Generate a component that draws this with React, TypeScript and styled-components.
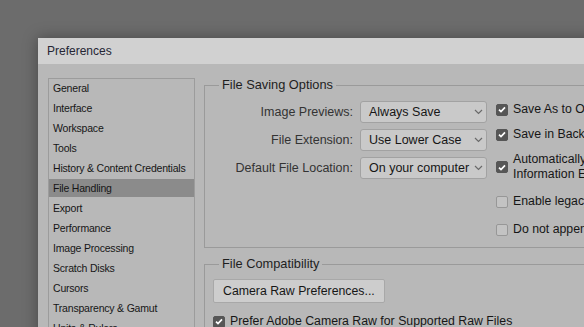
import React, { FC } from 'react';
import styled, { createGlobalStyle } from 'styled-components';

const GlobalStyle = createGlobalStyle`
  html, body {
    margin: 0;
    padding: 0;
    height: 100%;
    overflow: hidden;
    background: #6c6c6c;
  }
  body {
    font-family: "Liberation Sans", Arial, sans-serif;
    color: #1f1f1f;
  }
`;

const Desktop = styled.div`
  padding: 38px 0 0 38px;
`;

const Dialog = styled.div`
  width: 820px;
  height: 420px;
  background: #b8b8b8;
  box-shadow: 0 0 14px rgba(0, 0, 0, 0.35);
  display: flex;
  flex-direction: column;
`;

const TitleBar = styled.div`
  height: 26px;
  background: #d1d1d1;
  display: flex;
  align-items: center;
  padding-left: 9px;
  font-size: 12px;
  color: #262634;
`;

const Body = styled.div`
  display: flex;
  align-items: flex-start;
  padding: 14px 0 0 10px;
  gap: 9px;
`;

const Sidebar = styled.ul`
  list-style: none;
  margin: 0;
  padding: 0;
  width: 145px;
  height: 300px;
  border: 1px solid #9c9c9c;
  flex-shrink: 0;
`;

const NavItem = styled.li<{ $active?: boolean }>`
  height: 18px;
  margin-bottom: 2px;
  padding-left: 4px;
  display: flex;
  align-items: center;
  font-size: 10.5px;
  letter-spacing: -0.2px;
  color: #161616;
  background: ${(p) => (p.$active ? '#8b8b8b' : 'transparent')};
`;

const Panel = styled.div`
  flex: 1;
  margin-top: -1px;
  display: flex;
  flex-direction: column;
`;

const Group = styled.fieldset<{ $mt?: number; $pt: number; $pb: number }>`
  margin: ${(p) => p.$mt ?? 0}px 0 0 0;
  padding: ${(p) => p.$pt}px 0 ${(p) => p.$pb}px 8px;
  border: 1px solid #9a9a9a;
  min-width: 0;
`;

const Legend = styled.legend`
  margin-left: 6px;
  padding: 0 3px;
  line-height: 16px;
  font-size: 12.8px;
  color: #1e1e1e;
`;

const SavingLayout = styled.div`
  display: flex;
  align-items: flex-start;
  padding-left: 6px;
`;

const FieldGrid = styled.div`
  display: grid;
  grid-template-columns: 134px 127px;
  column-gap: 7px;
  row-gap: 6px;
  align-items: center;
`;

const FieldLabel = styled.span`
  justify-self: end;
  font-size: 12.5px;
  color: #333;
  white-space: nowrap;
`;

const Select = styled.div`
  height: 20px;
  border: 1px solid #a2a2a2;
  border-radius: 3px;
  background: #c9c9c9;
  display: flex;
  align-items: center;
  justify-content: space-between;
  padding: 0 3px 0 8px;
  font-size: 12.5px;
  color: #161616;
  white-space: nowrap;
  overflow: hidden;
`;

const Options = styled.div`
  margin-left: 9px;
  margin-top: 1px;
  display: flex;
  flex-direction: column;
`;

const CheckRow = styled.label<{ $mt?: number }>`
  display: flex;
  align-items: center;
  gap: 5px;
  margin-top: ${(p) => p.$mt ?? 0}px;
  font-size: 12.3px;
  line-height: 15px;
  color: #161616;
  white-space: nowrap;
`;

const Box = styled.span<{ $checked?: boolean }>`
  width: 12px;
  height: 12px;
  box-sizing: border-box;
  border-radius: 2px;
  flex-shrink: 0;
  display: flex;
  align-items: center;
  justify-content: center;
  background: ${(p) => (p.$checked ? '#565656' : '#c3c3c3')};
  border: 1px solid ${(p) => (p.$checked ? '#565656' : '#979797')};
`;

const Button = styled.button`
  width: 172px;
  height: 24px;
  border: 1px solid #a8a8a8;
  border-radius: 2px;
  background: #cdcdcd;
  text-align: left;
  padding: 0 0 0 9px;
  font-family: inherit;
  font-size: 12.3px;
  color: #161616;
`;

const CompatStack = styled.div`
  display: flex;
  flex-direction: column;
  align-items: flex-start;
`;

const Chevron: FC = () => (
  <svg width="9" height="6" viewBox="0 0 9 6">
    <polyline points="1,1 4.5,4.5 8,1" fill="none" stroke="#6a6a6a" strokeWidth="1.2" />
  </svg>
);

const Check: FC<{ checked?: boolean }> = ({ checked }) => (
  <Box $checked={checked}>
    {checked && (
      <svg width="8" height="7" viewBox="0 0 8 7">
        <polyline points="1,3.6 3,5.6 7,1.4" fill="none" stroke="#fff" strokeWidth="1.7" />
      </svg>
    )}
  </Box>
);

const nav = [
  'General',
  'Interface',
  'Workspace',
  'Tools',
  'History & Content Credentials',
  'File Handling',
  'Export',
  'Performance',
  'Image Processing',
  'Scratch Disks',
  'Cursors',
  'Transparency & Gamut',
  'Units & Rulers',
];

const fields = [
  { label: 'Image Previews:', value: 'Always Save' },
  { label: 'File Extension:', value: 'Use Lower Case' },
  { label: 'Default File Location:', value: 'On your computer' },
];

const App: FC = () => {
  return (
    <>
      <GlobalStyle />
      <Desktop>
        <Dialog>
          <TitleBar>Preferences</TitleBar>
          <Body>
            <Sidebar>
              {nav.map((item) => (
                <NavItem key={item} $active={item === 'File Handling'}>
                  {item}
                </NavItem>
              ))}
            </Sidebar>
            <Panel>
              <Group $pt={8} $pb={10}>
                <Legend>File Saving Options</Legend>
                <SavingLayout>
                  <FieldGrid>
                    {fields.map((f) => (
                      <React.Fragment key={f.label}>
                        <FieldLabel>{f.label}</FieldLabel>
                        <Select>
                          <span>{f.value}</span>
                          <Chevron />
                        </Select>
                      </React.Fragment>
                    ))}
                  </FieldGrid>
                  <Options>
                    <CheckRow>
                      <Check checked />
                      Save As to Original Folder
                    </CheckRow>
                    <CheckRow $mt={10}>
                      <Check checked />
                      Save in Background
                    </CheckRow>
                    <CheckRow $mt={10}>
                      <Check checked />
                      <span>
                        Automatically Save Recovery
                        <br />
                        Information Every:
                      </span>
                    </CheckRow>
                    <CheckRow $mt={12}>
                      <Check />
                      Enable legacy Save As
                    </CheckRow>
                    <CheckRow $mt={13}>
                      <Check />
                      Do not append copy to filename
                    </CheckRow>
                  </Options>
                </SavingLayout>
              </Group>
              <Group $mt={8} $pt={7} $pb={10}>
                <Legend>File Compatibility</Legend>
                <CompatStack>
                  <Button>Camera Raw Preferences...</Button>
                  <CheckRow $mt={11}>
                    <Check checked />
                    Prefer Adobe Camera Raw for Supported Raw Files
                  </CheckRow>
                </CompatStack>
              </Group>
            </Panel>
          </Body>
        </Dialog>
      </Desktop>
    </>
  );
};

export default App;
